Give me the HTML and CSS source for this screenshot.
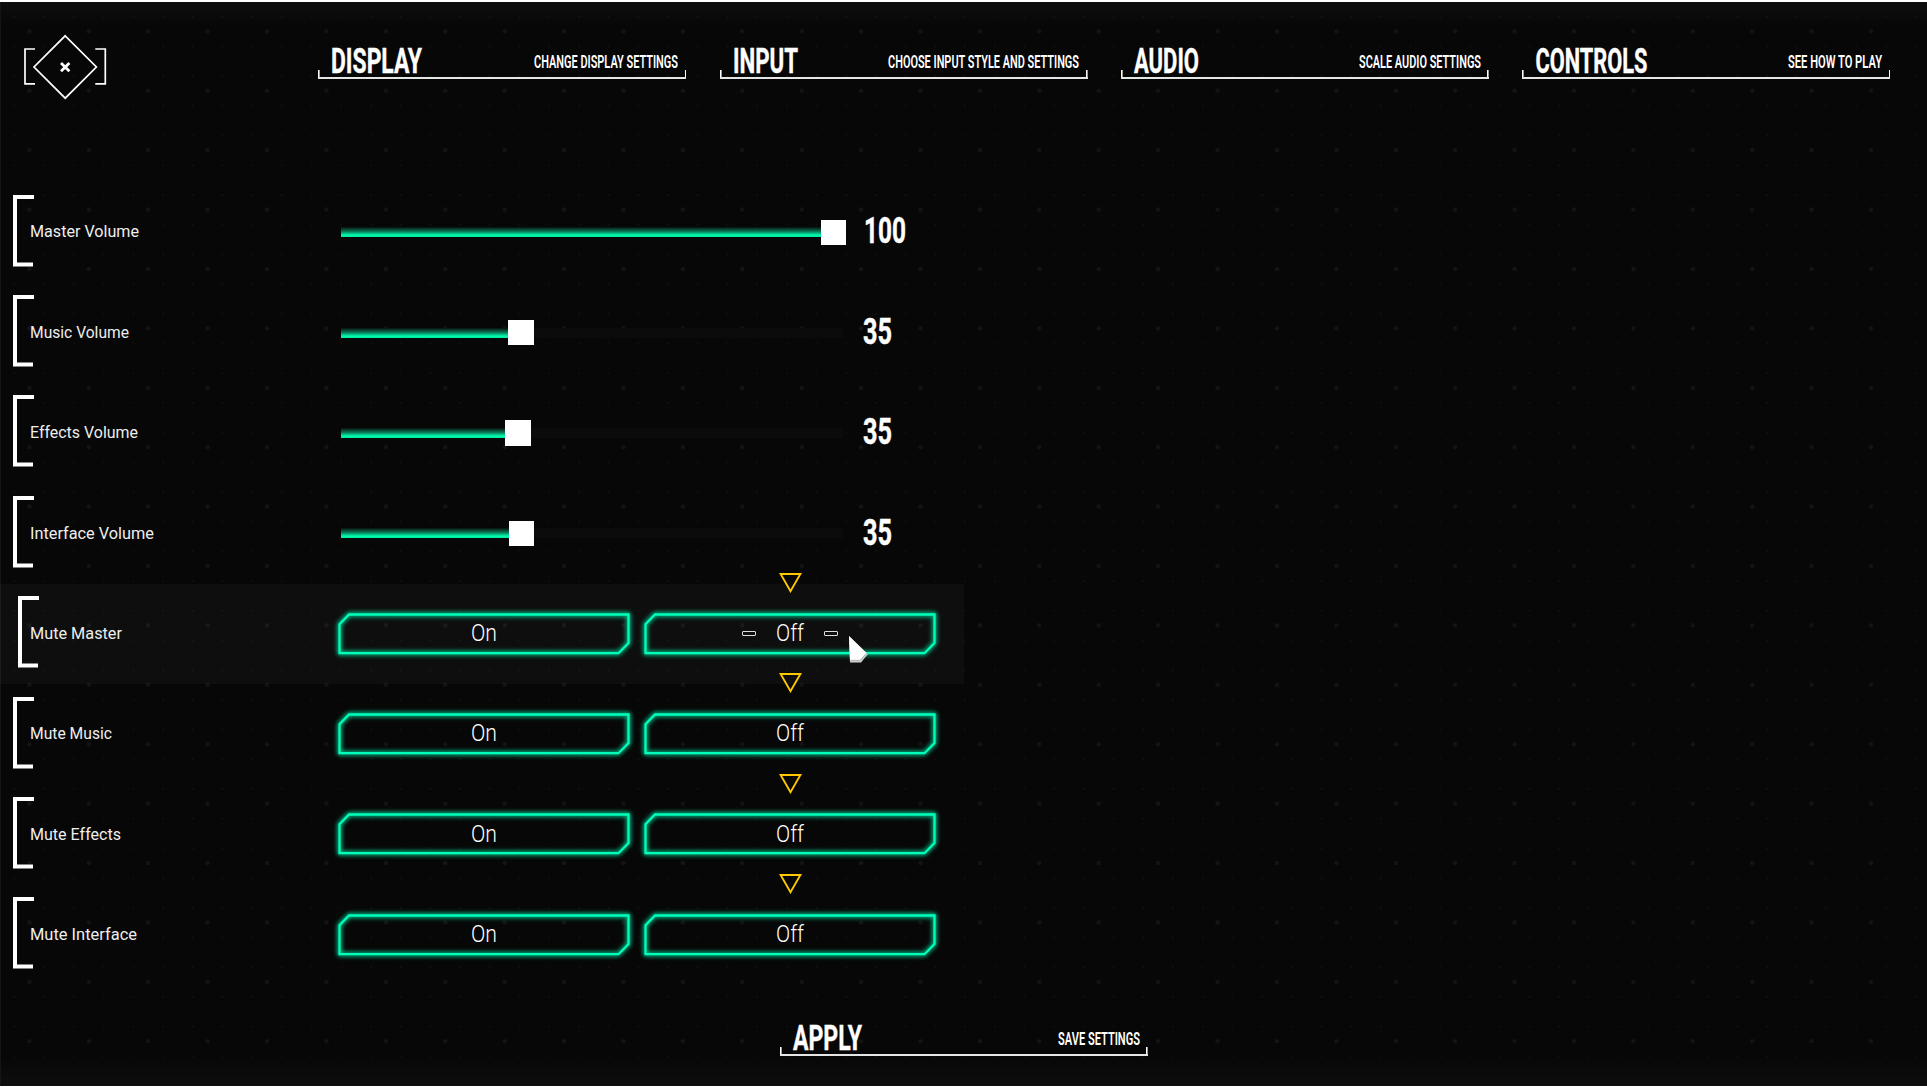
FILE: index.html
```
<!DOCTYPE html>
<html lang="en">
<head>
<meta charset="utf-8">
<title>Audio settings</title>
<link rel="stylesheet" href="styles.css">
</head>
<body>
<svg class="defs" width="0" height="0" aria-hidden="true">
  <symbol id="frame" viewBox="0 0 292 42" overflow="visible">
    <path d="M11 1.5H290.5V30L280.5 40.2H1.5V11.3Z"/>
  </symbol>
  <symbol id="bracket" viewBox="0 0 21 72"><path d="M21 2H2V69.5H20"/></symbol>
  <symbol id="marker" viewBox="0 0 23 20"><path d="M1.6 1H21.4L11.5 18.2Z"/></symbol>
</svg>
<div class="screen">
  <header class="top">
    <svg class="close" width="82" height="66" viewBox="0 0 82 66">
      <path d="M41.2 1.8L72.4 33L41.2 64.2L10 33Z"/>
      <path d="M11 15H1V49.8H11M71.3 15H81.3V49.8H71.3"/>
      <path class="x" d="M37 29L45.4 37.2M45.4 29L37 37.2"/>
    </svg>
    <nav class="tabs">
      <div class="tab"><svg class="title" width="91" height="30"><text y="27.3" textLength="91" lengthAdjust="spacingAndGlyphs">DISPLAY</text></svg><svg class="hint" width="144" height="20"><text y="16" textLength="144" lengthAdjust="spacingAndGlyphs">CHANGE DISPLAY SETTINGS</text></svg></div>
      <div class="tab"><svg class="title" width="66" height="30"><text y="27.3" textLength="65" lengthAdjust="spacingAndGlyphs">INPUT</text></svg><svg class="hint" width="191" height="20"><text y="16" textLength="191" lengthAdjust="spacingAndGlyphs">CHOOSE INPUT STYLE AND SETTINGS</text></svg></div>
      <div class="tab"><svg class="title" width="66" height="30"><text y="27.3" textLength="65" lengthAdjust="spacingAndGlyphs">AUDIO</text></svg><svg class="hint" width="122" height="20"><text y="16" textLength="122" lengthAdjust="spacingAndGlyphs">SCALE AUDIO SETTINGS</text></svg></div>
      <div class="tab"><svg class="title" width="113" height="30"><text y="27.3" x=".5" textLength="112" lengthAdjust="spacingAndGlyphs">CONTROLS</text></svg><svg class="hint" width="94" height="20"><text y="16" textLength="94" lengthAdjust="spacingAndGlyphs">SEE HOW TO PLAY</text></svg></div>
    </nav>
  </header>

  <main class="rows">
    <div class="row">
      <svg class="bracket"><use href="#bracket"/></svg>
      <div class="label"><svg width="109" height="24"><text y="18" textLength="109" lengthAdjust="spacingAndGlyphs">Master Volume</text></svg></div>
      <div class="slider"><i class="fill" style="width:479.5px"></i><i class="knob"></i></div>
      <svg class="value" width="43" height="30"><text y="27.5" x="1" textLength="42" lengthAdjust="spacingAndGlyphs">100</text></svg>
    </div>
    <div class="row">
      <svg class="bracket"><use href="#bracket"/></svg>
      <div class="label"><svg width="99" height="24"><text y="18" textLength="99" lengthAdjust="spacingAndGlyphs">Music Volume</text></svg></div>
      <div class="slider"><i class="fill" style="width:167px"></i><i class="knob"></i></div>
      <svg class="value" width="43" height="30"><text y="27.5" textLength="29" lengthAdjust="spacingAndGlyphs">35</text></svg>
    </div>
    <div class="row">
      <svg class="bracket"><use href="#bracket"/></svg>
      <div class="label"><svg width="109" height="24"><text y="18" textLength="108" lengthAdjust="spacingAndGlyphs">Effects Volume</text></svg></div>
      <div class="slider"><i class="fill" style="width:164px"></i><i class="knob"></i></div>
      <svg class="value" width="43" height="30"><text y="27.5" textLength="29" lengthAdjust="spacingAndGlyphs">35</text></svg>
    </div>
    <div class="row">
      <svg class="bracket"><use href="#bracket"/></svg>
      <div class="label"><svg width="125" height="24"><text y="18" textLength="124" lengthAdjust="spacingAndGlyphs">Interface Volume</text></svg></div>
      <div class="slider"><i class="fill" style="width:167.5px"></i><i class="knob"></i></div>
      <svg class="value" width="43" height="30"><text y="27.5" textLength="29" lengthAdjust="spacingAndGlyphs">35</text></svg>
    </div>
    <div class="row active">
      <svg class="bracket"><use href="#bracket"/></svg>
      <div class="label"><svg width="109" height="24"><text y="18" textLength="92" lengthAdjust="spacingAndGlyphs">Mute Master</text></svg></div>
      <div class="choices">
        <div class="choice"><svg class="frame"><use href="#frame"/></svg><svg class="word" width="26" height="24"><text y="20.5" textLength="26" lengthAdjust="spacingAndGlyphs">On</text></svg></div>
        <div class="choice"><svg class="frame"><use href="#frame"/></svg><svg class="marker"><use href="#marker"/></svg><i class="dash"></i><svg class="word" width="28" height="24"><text y="20.5" textLength="28" lengthAdjust="spacingAndGlyphs">Off</text></svg><i class="dash"></i></div>
      </div>
    </div>
    <div class="row">
      <svg class="bracket"><use href="#bracket"/></svg>
      <div class="label"><svg width="109" height="24"><text y="18" textLength="82" lengthAdjust="spacingAndGlyphs">Mute Music</text></svg></div>
      <div class="choices">
        <div class="choice"><svg class="frame"><use href="#frame"/></svg><svg class="word" width="26" height="24"><text y="20.5" textLength="26" lengthAdjust="spacingAndGlyphs">On</text></svg></div>
        <div class="choice"><svg class="frame"><use href="#frame"/></svg><svg class="marker"><use href="#marker"/></svg><svg class="word" width="28" height="24"><text y="20.5" textLength="28" lengthAdjust="spacingAndGlyphs">Off</text></svg></div>
      </div>
    </div>
    <div class="row">
      <svg class="bracket"><use href="#bracket"/></svg>
      <div class="label"><svg width="109" height="24"><text y="18" textLength="91" lengthAdjust="spacingAndGlyphs">Mute Effects</text></svg></div>
      <div class="choices">
        <div class="choice"><svg class="frame"><use href="#frame"/></svg><svg class="word" width="26" height="24"><text y="20.5" textLength="26" lengthAdjust="spacingAndGlyphs">On</text></svg></div>
        <div class="choice"><svg class="frame"><use href="#frame"/></svg><svg class="marker"><use href="#marker"/></svg><svg class="word" width="28" height="24"><text y="20.5" textLength="28" lengthAdjust="spacingAndGlyphs">Off</text></svg></div>
      </div>
    </div>
    <div class="row">
      <svg class="bracket"><use href="#bracket"/></svg>
      <div class="label"><svg width="109" height="24"><text y="18" textLength="107" lengthAdjust="spacingAndGlyphs">Mute Interface</text></svg></div>
      <div class="choices">
        <div class="choice"><svg class="frame"><use href="#frame"/></svg><svg class="word" width="26" height="24"><text y="20.5" textLength="26" lengthAdjust="spacingAndGlyphs">On</text></svg></div>
        <div class="choice"><svg class="frame"><use href="#frame"/></svg><svg class="marker"><use href="#marker"/></svg><svg class="word" width="28" height="24"><text y="20.5" textLength="28" lengthAdjust="spacingAndGlyphs">Off</text></svg></div>
      </div>
    </div>
  </main>

  <footer class="bottom">
    <div class="tab"><svg class="title" width="70" height="30"><text y="27.3" textLength="69" lengthAdjust="spacingAndGlyphs">APPLY</text></svg><svg class="hint" width="82" height="20"><text y="16" textLength="82" lengthAdjust="spacingAndGlyphs">SAVE SETTINGS</text></svg></div>
  </footer>

  <svg class="cursor" width="20" height="28" viewBox="0 0 20 28">
    <path fill="#cfcfcf" d="M0 0L18.8 18.3L12 26.6H1Z"/>
    <path fill="#fff" d="M0 0L17.5 17L11 24H1Z"/>
    <path fill="none" stroke="#aaa" stroke-width=".8" d="M1.5 24.3H11.2L17.2 17.6"/>
  </svg>
</div>
</body>
</html>
```
FILE: styles.css
```
* { box-sizing: border-box; }
body { margin: 0; background: #070707; font-family: Roboto, "Liberation Sans", sans-serif; }
svg { display: block; flex: none; overflow: visible; }
.defs { position: absolute; }
text { fill: #fff; }

.screen {
  position: relative;
  width: 1927px;
  height: 1087px;
  overflow: hidden;
  border-top: 2px solid #fff;
  border-bottom: 1px solid #fff;
  display: flex;
  flex-direction: column;
  background-color: #070707;
  background-image:
    linear-gradient(90deg, #151515 1px, transparent 1px),
    linear-gradient(#ffffff07, transparent 26px),
    linear-gradient(0deg, #ffffff07, transparent 30px),
    radial-gradient(circle, #141414 1.6px, transparent 2.6px),
    radial-gradient(circle, #101010 .6px, transparent 1.5px);
  background-size: auto, auto, auto, 59.42px 59.42px, 29.71px 29.71px;
  background-position: 0 0, 0 0, 0 0, -.3px -.4px, -.3px -.1px;
}

.top { display: flex; height: 180.3px; padding: 32px 0 0 24px; }
.close path { fill: none; stroke: #fff; stroke-width: 1.7; }
.close .x { stroke-width: 2.8; }
.tabs { display: flex; gap: 33.4px; margin: 11px 0 0 212.3px; }

.tab {
  width: 368px;
  height: 34px;
  padding: 1px 8.5px 0 13px;
  display: flex;
  justify-content: space-between;
  align-items: flex-start;
  background:
    linear-gradient(#e4e6e6, #e4e6e6) 0 100% / 100% 2px no-repeat,
    linear-gradient(#fff, #fff) 0 100% / 1.6px 9px no-repeat,
    linear-gradient(#fff, #fff) 100% 100% / 1.6px 9px no-repeat;
}
.title text { font-size: 35.5px; font-weight: 700; stroke: #fff; stroke-width: .4px; }
.hint { margin-top: 6px; }
.hint text { font-size: 18.5px; font-weight: 600; }

.rows { display: flex; flex-direction: column; width: 963.5px; }
.row { height: 100.4px; padding-left: 13px; display: flex; }
.row.active { background: #ffffff08; }
.bracket { width: 21px; height: 72px; margin: 12.3px -3px 0 0; fill: none; stroke: #fff; stroke-width: 4; }
.active .bracket { margin-left: 5px; margin-right: -8px; }
.label { width: 310px; padding-top: 37.2px; }
.label svg { margin-left: -1px; }
.label text { font-size: 17px; fill: #eee; }

.slider { width: 501.7px; height: 10px; margin-top: 45px; display: flex; align-items: center; background: #0b0b0b; }
.fill { height: 10px; flex: none; background: linear-gradient(#07100d, #087a58 45%, #00e8a0 75%, #00ffb0 90%, #00dc98); }
.knob { width: 25.6px; height: 25.6px; flex: none; background: #fff; }
.value { margin: 33.2px 0 0 20.5px; }
.value text { font-size: 36px; font-weight: 700; stroke: #fff; stroke-width: .4px; }

.choices { display: flex; gap: 14.4px; margin: 28.7px 0 0 -3px; }
.choice { position: relative; width: 292px; height: 42px; display: flex; justify-content: center; align-items: center; gap: 20px; }
.frame { position: absolute; inset: 0; width: 292px; height: 42px; fill: none; stroke: #00ffbb; stroke-width: 2.3; filter: drop-shadow(0 0 2px #00c890) drop-shadow(0 0 2px #00996c); }
.marker { position: absolute; left: 134.5px; top: -39.6px; width: 23px; height: 20px; fill: none; stroke: #ffc800; stroke-width: 1.9; }
.word { margin-top: -3px; }
.word text { font-size: 23px; font-weight: 300; }
.dash { width: 14px; height: 5px; margin-top: -1px; border: 1.4px solid #ddd; border-radius: 1px; }

.bottom { display: flex; padding: 36.2px 0 0 780px; }
.bottom .tab { height: 34px; }
.cursor { position: absolute; left: 849px; top: 634px; }
```
